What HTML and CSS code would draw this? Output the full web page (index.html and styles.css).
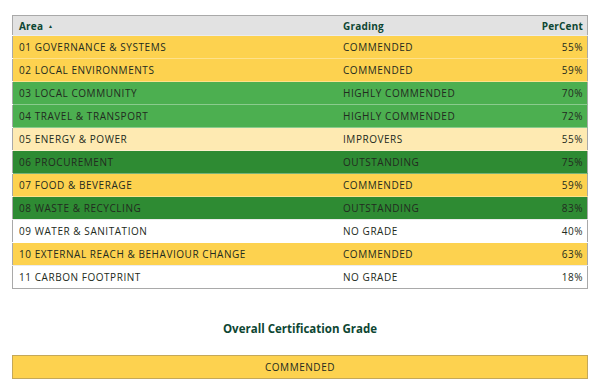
FILE: index.html
```html
<!DOCTYPE html>
<html>
<head>
<meta charset="utf-8">
<link rel="stylesheet" href="styles.css">
</head>
<body>
<div class="page">
  <table class="grades">
    <thead>
      <tr>
        <th class="c-area">Area <span class="sort">&#9650;</span></th>
        <th class="c-grade">Grading</th>
        <th class="c-pct">PerCent</th>
      </tr>
    </thead>
    <tbody>
      <tr class="commended"><td>01 GOVERNANCE &amp; SYSTEMS</td><td>COMMENDED</td><td class="c-pct">55%</td></tr>
      <tr class="commended"><td>02 LOCAL ENVIRONMENTS</td><td>COMMENDED</td><td class="c-pct">59%</td></tr>
      <tr class="highly"><td>03 LOCAL COMMUNITY</td><td>HIGHLY COMMENDED</td><td class="c-pct">70%</td></tr>
      <tr class="highly"><td>04 TRAVEL &amp; TRANSPORT</td><td>HIGHLY COMMENDED</td><td class="c-pct">72%</td></tr>
      <tr class="improvers"><td>05 ENERGY &amp; POWER</td><td>IMPROVERS</td><td class="c-pct">55%</td></tr>
      <tr class="outstanding"><td>06 PROCUREMENT</td><td>OUTSTANDING</td><td class="c-pct">75%</td></tr>
      <tr class="commended"><td>07 FOOD &amp; BEVERAGE</td><td>COMMENDED</td><td class="c-pct">59%</td></tr>
      <tr class="outstanding"><td>08 WASTE &amp; RECYCLING</td><td>OUTSTANDING</td><td class="c-pct">83%</td></tr>
      <tr class="none"><td>09 WATER &amp; SANITATION</td><td>NO GRADE</td><td class="c-pct">40%</td></tr>
      <tr class="commended"><td>10 EXTERNAL REACH &amp; BEHAVIOUR CHANGE</td><td>COMMENDED</td><td class="c-pct">63%</td></tr>
      <tr class="none"><td>11 CARBON FOOTPRINT</td><td>NO GRADE</td><td class="c-pct">18%</td></tr>
    </tbody>
  </table>
  <h2 class="overall-title">Overall Certification Grade</h2>
  <div class="overall-bar">COMMENDED</div>
</div>
</body>
</html>
```

FILE: styles.css
```css
html, body {
  margin: 0;
  padding: 0;
  background: #ffffff;
}
body {
  font-family: "Open Sans", "Liberation Sans", sans-serif;
  color: #222a20;
}
.page {
  padding: 15px 12px 0 12px;
  display: flex;
  flex-direction: column;
}
.grades {
  width: 576px;
  table-layout: fixed;
  border-collapse: collapse;
  border: 1px solid #a9a9a9;
  font-size: 10px;
  letter-spacing: 0.55px;
}
.grades th {
  background: #e2e2e2;
  height: 19px;
  padding: 0 4px 0 6px;
  text-align: left;
  font-weight: 700;
  color: #0d4632;
  font-size: 10px;
  letter-spacing: 0.2px;
}
.sort {
  font-size: 5px;
  vertical-align: 2px;
  margin-left: 2px;
}
.grades td {
  height: 22px;
  padding: 0 4px 0 6px;
  border-top: 1px solid rgba(255,255,255,0.35);
  white-space: nowrap;
}
.c-area { width: 314px; }
.c-grade { width: 160px; }
.grades .c-pct { text-align: right; }
.commended td { background: #fdd24f; }
.highly td { background: #4caf50; }
.improvers td { background: #feeab2; }
.outstanding td { background: #2e8b33; }
.none td { background: #ffffff; border-top: 1px solid #ececec; }
.overall-title {
  margin: 32px 0 0 0;
  text-align: center;
  font-size: 11.5px;
  font-weight: 700;
  color: #0d4632;
}
.overall-bar {
  margin-top: 19px;
  height: 22px;
  border: 1px solid #c4a859;
  background: #fdd24f;
  display: flex;
  align-items: center;
  justify-content: center;
  font-size: 10px;
  letter-spacing: 0.55px;
  width: 574px;
}
```
